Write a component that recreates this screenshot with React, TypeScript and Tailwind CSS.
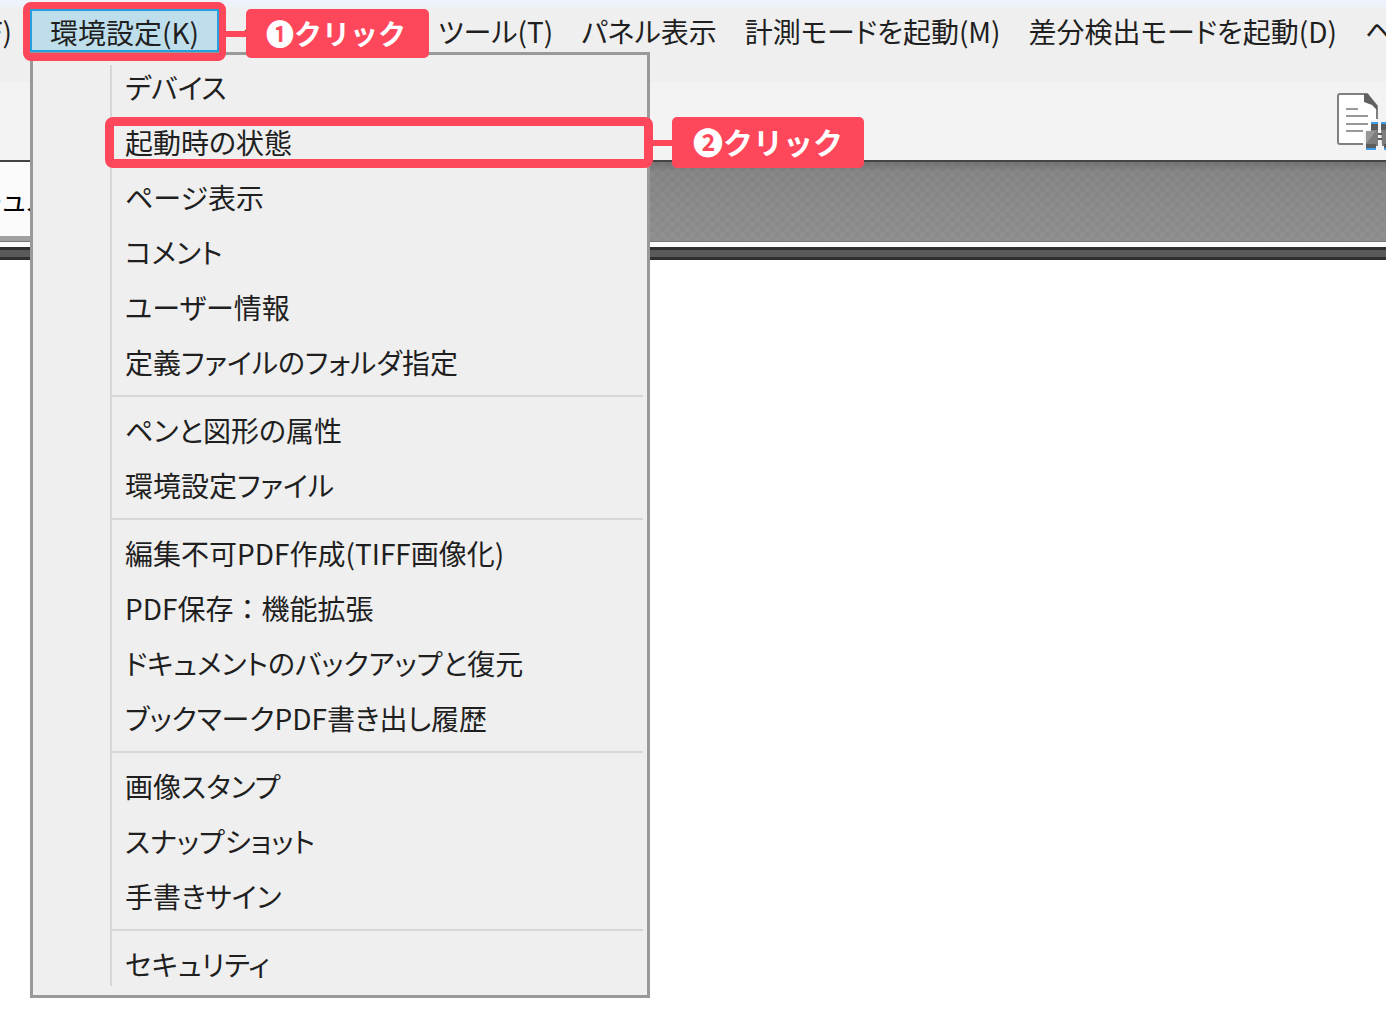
import React from "react";

const menuGroups = [
  ["デバイス", "起動時の状態", "ページ表示", "コメント", "ユーザー情報", "定義ファイルのフォルダ指定"],
  ["ペンと図形の属性", "環境設定ファイル"],
  ["編集不可PDF作成(TIFF画像化)", "PDF保存：機能拡張", "ドキュメントのバックアップと復元", "ブックマークPDF書き出し履歴"],
  ["画像スタンプ", "スナップショット", "手書きサイン"],
  ["セキュリティ"],
];

const barItems = ["ツール(T)", "パネル表示", "計測モードを起動(M)", "差分検出モードを起動(D)", "ヘルプ(H)"];

function SettingsMenu() {
  return (
    <div className="absolute left-0 top-[43px] w-[620px] border-[3px] border-[#999999] bg-[#efefef] pt-1 pb-1 z-10">
      {/* Icon gutter line */}
      <span className="absolute left-[77px] top-[10px] bottom-[9px] w-[2px] bg-[#d7d7d7]" />
      {menuGroups.map((group, i) => (
        <ul key={i}>
          {i > 0 && <li className="ml-[79px] mr-1 mt-[6px] mb-[5px] h-[2px] bg-[#d7d7d7]" />}
          {group.map((label) => (
            <li key={label} className="relative">
              <button
                className={
                  label.includes("：")
                    ? "block w-full h-[55px] pl-[92px] text-left whitespace-nowrap [font-feature-settings:normal]"
                    : "block w-full h-[55px] pl-[92px] text-left whitespace-nowrap"
                }
              >
                {label}
              </button>
              {label === "起動時の状態" && (
                <>
                  <span className="absolute left-[72px] -right-[6px] top-[3px] h-[51px] border-[9px] border-[#ff475c] rounded-lg pointer-events-none" />
                  <div className="absolute left-[620px] top-[3px] flex items-center">
                    <span className="w-[19px] h-[6px] bg-[#ff475c]" />
                    <span className="h-[51px] px-[21px] pb-[2px] flex items-center rounded-[5px] bg-[#ff475c] text-white text-[30px] font-bold whitespace-nowrap [font-feature-settings:normal]">
                      ❷クリック
                    </span>
                  </div>
                </>
              )}
            </li>
          ))}
        </ul>
      ))}
    </div>
  );
}

function SearchDocumentIcon() {
  return (
    <svg width="50" height="60" viewBox="0 0 50 60" fill="none" aria-hidden="true">
      <path d="M2 2H31L41 14V28H35V36L28 40V52H2Z" fill="#fff" />
      <path d="M27 52H4a2 2 0 0 1-2-2V4a2 2 0 0 1 2-2H31L41 14V27" stroke="#808080" strokeWidth="2" />
      <path d="M28 2H32L41 14V18L36 13L28 10Z" fill="#606060" />
      <path d="M10 17H22M10 24H32M10 32H32M10 39H27" stroke="#999" strokeWidth="2" />
      {/* Binoculars, cut by the window edge */}
      <path d="M35 37H42V54H30V39H35ZM45 37H50V54H46Z" fill="#7c7c7c" />
      <path d="M30 52V39H40Z" fill="#979797" />
      <path d="M35 32H42V38H35ZM45 32H50V38H45ZM30 52H40V56H30ZM48 52H50V56H48Z" fill="#5c5c5c" />
      <path d="M35 30H42V32H35ZM45 30H50V32H45ZM30 56H40V58H30ZM48 56H50V58H48Z" fill="#3f9df0" />
      <path d="M42 41H46V43H42ZM42 46H46V48H42Z" fill="#5c5c5c" />
    </svg>
  );
}

export default function App() {
  return (
    <div className="relative min-h-screen w-full overflow-hidden bg-white text-[#1f1f1f] text-[28px] font-['Noto_Sans_CJK_JP',sans-serif] [font-feature-settings:'palt']">
      <div className="h-[7px] bg-[#edf2fb]" />

      {/* Menu bar */}
      <nav className="flex h-[75px] items-start bg-[#efefef] pt-[2px] whitespace-nowrap">
        <div className="flex w-[30px] shrink-0 justify-end overflow-hidden">
          <button className="h-[43px] px-[18px]">ファイル(F)</button>
        </div>
        <div className="relative shrink-0">
          <button className="block h-[43px] w-[189px] border-2 border-[#26a0da] bg-[#bfdeeb] pb-[2px]">環境設定(K)</button>
          <SettingsMenu />
          <span className="absolute -inset-x-[7px] -top-[7px] -bottom-[9px] border-[7px] border-b-8 border-[#ff475c] rounded-lg z-20 pointer-events-none" />
          <div className="absolute left-[196px] top-0 z-20 flex items-center">
            <span className="w-5 h-[6px] bg-[#ff475c]" />
            <span className="h-[49px] w-[183px] pl-5 pb-[2px] flex items-center rounded-[5px] bg-[#ff475c] text-white font-bold [font-feature-settings:normal]">
              ❶クリック
            </span>
          </div>
        </div>
        <button className="h-[43px] w-[205px] shrink-0 px-5 text-left">ページ(P)</button>
        {barItems.map((label) => (
          <button key={label} className="h-[43px] shrink-0 px-[14px]">
            {label}
          </button>
        ))}
      </nav>

      {/* Toolbar */}
      <div className="flex h-[78px] justify-end bg-[#f3f3f3] pt-[10px]">
        <button aria-label="ドキュメント検索" className="h-[60px]">
          <SearchDocumentIcon />
        </button>
      </div>

      {/* Document tabs */}
      <div className="flex h-[81px] border-t-2 border-[#444444] bg-[repeating-conic-gradient(#ffffff00_0_25%,#ffffff0a_0_50%),linear-gradient(#707070,#838383_12%,#8c8c8c)] bg-[length:10px_10px,100%_100%]">
        <div className="flex w-[200px] items-center overflow-hidden border-b-[5px] border-[#a0a0a0] bg-[#fbfbfb] text-black">
          <span className="-ml-6 whitespace-nowrap">キュメント</span>
        </div>
      </div>
      <div className="h-[6px] border-t border-[#777777] bg-[#fbfbfb]" />
      <div className="h-[13px] border-y-[3px] border-[#303030] bg-[#5a5a5a]" />
    </div>
  );
}
